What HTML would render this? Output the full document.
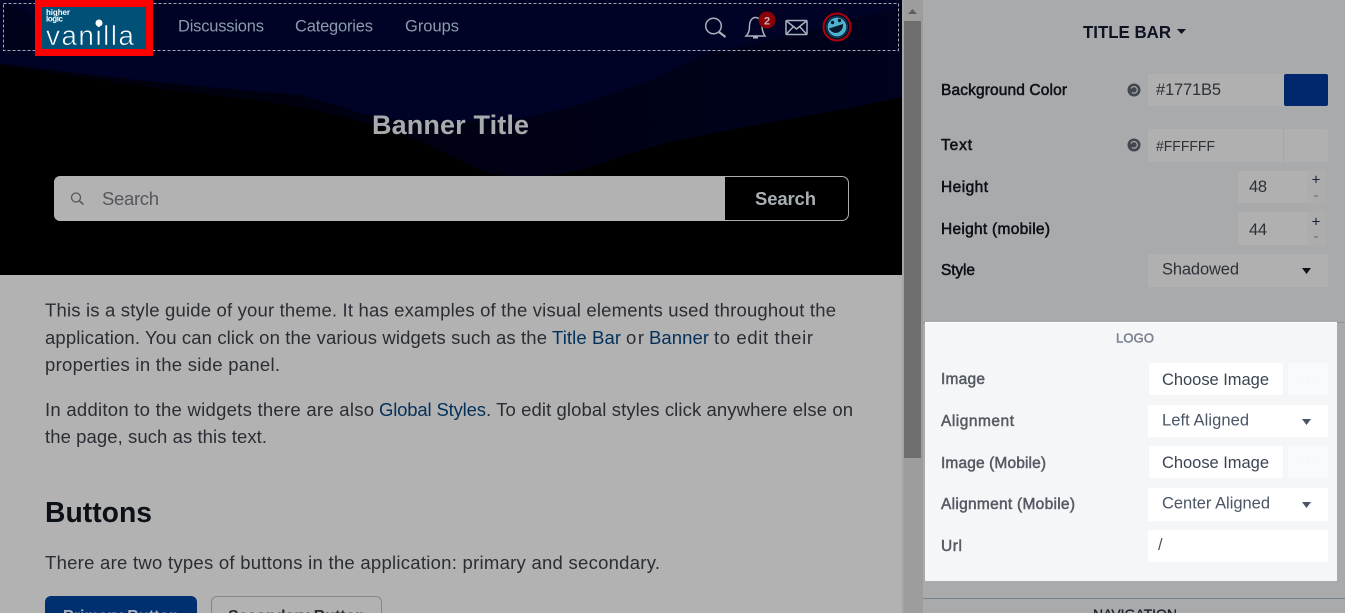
<!DOCTYPE html>
<html><head><meta charset="utf-8"><title>Style Guide</title>
<style>html,body{margin:0;padding:0;width:1345px;height:613px;overflow:hidden;background:#b2b2b2}svg{display:block}text{font-family:"Liberation Sans",Arial,sans-serif}</style></head>
<body>
<svg width="1345" height="613" viewBox="0 0 1345 613" xmlns="http://www.w3.org/2000/svg">
<defs><linearGradient id="m" x1="0" y1="0" x2="1" y2="0"><stop offset="0" stop-color="#00010a"/><stop offset=".5" stop-color="#000112"/><stop offset="1" stop-color="#00021e"/></linearGradient></defs>
<rect width="1345" height="613" fill="#b2b2b2"/>
<!-- banner -->
<rect x="0" y="0" width="902" height="275" fill="#000"/>
<path d="M0 0H902V97C840 112 760 122 667 143C630 152 600 165 567 173C530 178 500 178 480 170C450 155 425 143 400 133C340 115 300 105 240 98C150 88 70 76 0 66Z" fill="url(#m)"/>
<path d="M0 0H902V6C850 22 790 35 710 53C680 65 660 78 633 87C600 98 585 104 567 108C540 115 520 119 500 120C450 124 400 122 360 113C340 106 320 100 300 95C240 90 100 78 0 63Z" fill="#000226"/>
<rect x="0" y="54" width="902" height="2" fill="#000" opacity=".12"/>
<path d="M3 4C25 5 40 20 42 50H3Z" fill="#00011a"/>
<rect x="3.500" y="3.500" width="895" height="47" fill="none" stroke="#a0a9b1" stroke-dasharray="3 2"/>
<!-- logo -->
<rect x="35" y="0" width="118" height="56" fill="#f00"/>
<rect x="42" y="7" width="104" height="42" fill="#005078"/>
<text x="46" y="15" font-size="8" font-weight="bold" fill="#fff" textLength="24">higher</text>
<text x="46" y="21.500" font-size="8" font-weight="bold" fill="#fff" textLength="17">logic</text>
<text x="46" y="45" font-size="28" fill="#fff" stroke="#005078" stroke-width=".6" textLength="88">vanilla</text>
<circle cx="99" cy="23" r="3.500" fill="#fff"/>
<!-- nav -->
<g font-size="16.500" fill="#8a9cab">
<text x="178" y="31.500" textLength="86">Discussions</text>
<text x="295" y="31.500" textLength="78">Categories</text>
<text x="405" y="31.500" textLength="54">Groups</text>
</g>
<!-- icons -->
<g fill="none" stroke="#a7b3bb" stroke-width="1.500">
<circle cx="713.500" cy="26" r="7.800"/><path d="M719 32L725.500 37" stroke-width="2.200"/>
<path d="M746 36C749 33 749.500 30 749.500 26C749.500 21 752 17.500 755.500 17.500C759 17.500 762 21 762 26C762 30 763 33 765 36Z"/>
<path d="M753 37.500H758" stroke-width="2"/>
<rect x="786" y="20.500" width="21" height="14" rx="1"/><path d="M786.500 21L796.500 29L806.500 21M786.500 34L793.500 26.500M806.500 34L799.500 26.500"/>
</g>
<circle cx="767" cy="20" r="8.500" fill="#8a0208"/>
<text x="767" y="24.500" font-size="11" font-weight="bold" fill="#c9b6b8" text-anchor="middle">2</text>
<circle cx="837" cy="27" r="13.500" fill="#03102c" stroke="#b20008" stroke-width="2"/>
<circle cx="837" cy="27" r="10.800" fill="#50b2cf"/>
<circle cx="837" cy="27" r="10" fill="none" stroke="#06263c" stroke-width="1.300"/>
<path d="M829 28.500L843 24C844 32 834 37 829 28.500Z" fill="#06182c"/>
<circle cx="832.500" cy="22.500" r="1.700" fill="#06182c"/><circle cx="839.500" cy="20.500" r="1.700" fill="#06182c"/>
<!-- banner content -->
<text x="372" y="134" font-size="27" font-weight="bold" fill="#a8abae" textLength="157">Banner Title</text>
<path d="M725 176H60a6 6 0 0 0-6 6V215a6 6 0 0 0 6 6H725Z" fill="#b2b2b2"/>
<path d="M725 176.500H842a6.500 6.500 0 0 1 6.500 6.500V214a6.500 6.500 0 0 1-6.500 6.500H725" fill="#000" stroke="#a9afb3"/>
<circle cx="76" cy="197.500" r="4.500" fill="none" stroke="#55585d" stroke-width="1.300"/><path d="M79.500 201L83.500 204.500" stroke="#55585d" stroke-width="1.500"/>
<text x="102" y="205" font-size="18.500" fill="#54575c" textLength="57">Search</text>
<text x="755" y="205" font-size="18.500" font-weight="bold" fill="#a9b0b4" textLength="61">Search</text>
<!-- body text -->
<g font-size="18.500" fill="#2a2d33">
<text x="45" y="316.500" textLength="791">This is a style guide of your theme. It has examples of the visual elements used throughout the</text>
<text x="45" y="344" textLength="502">application. You can click on the various widgets such as the</text>
<text x="552" y="344" textLength="69" fill="#03305a">Title Bar</text>
<text x="626" y="344" textLength="18">or</text>
<text x="649" y="344" textLength="60" fill="#03305a">Banner</text>
<text x="714" y="344" textLength="99">to edit their</text>
<text x="45" y="371" textLength="235">properties in the side panel.</text>
<text x="45" y="416" textLength="329">In additon to the widgets there are also</text>
<text x="379" y="416" textLength="107" fill="#03305a">Global Styles</text>
<text x="486" y="416" textLength="367">. To edit global styles click anywhere else on</text>
<text x="45" y="443" textLength="222">the page, such as this text.</text>
<text x="45" y="569" textLength="615">There are two types of buttons in the application: primary and secondary.</text>
</g>
<text x="45" y="522" font-size="28.300" font-weight="bold" fill="#0c1017" textLength="107">Buttons</text>
<path d="M45 613V602a6 6 0 0 1 6-6H191a6 6 0 0 1 6 6V613Z" fill="#003070"/>
<text x="63" y="621" font-size="16" font-weight="bold" fill="#a7b2c0" textLength="116">Primary Button</text>
<path d="M211.500 613V602a5.500 5.500 0 0 1 5.500-5.500H376a5.500 5.500 0 0 1 5.500 5.500V613" fill="none" stroke="#868686"/>
<text x="228" y="621" font-size="16" font-weight="bold" fill="#2a2d33" textLength="137">Secondary Button</text>
<!-- scrollbar -->
<rect x="902" y="0" width="21" height="613" fill="#9d9d9d"/>
<rect x="902" y="0" width="2" height="613" fill="#a5a5a5"/>
<rect x="904" y="21" width="17" height="437" fill="#6e6e6e"/>
<path d="M908 14L912.500 9L917 14Z" fill="#5f5f5f"/>
<!-- right panel -->
<rect x="923" y="0" width="422" height="613" fill="#a9aaac"/>
<rect x="923" y="322" width="422" height="1" fill="#8e939a"/>
<rect x="923" y="598" width="422" height="1" fill="#76828f"/>
<text x="1083" y="38" font-size="17.500" font-weight="bold" fill="#0d1320" textLength="88" lengthAdjust="spacingAndGlyphs">TITLE BAR</text>
<path d="M1177 29H1186L1181.500 34Z" fill="#0d1320"/>
<g font-size="15.500" fill="#0d1218" stroke="#0d1218" stroke-width=".55">
<text x="941" y="95" textLength="126">Background Color</text>
<text x="941" y="150" textLength="31">Text</text>
<text x="941" y="192" textLength="47">Height</text>
<text x="941" y="234" textLength="109">Height (mobile)</text>
<text x="941" y="275" textLength="34">Style</text>
</g>
<g fill="#42474f"><circle cx="1134" cy="90" r="6.500"/><circle cx="1134" cy="145" r="6.500"/></g>
<g fill="none" stroke="#a9aaac" stroke-width="1.200"><path d="M1131 88.500a3.300 3.300 0 1 1 1 4M1131 143.500a3.300 3.300 0 1 1 1 4"/></g>
<g fill="#b0b0b0">
<rect x="1148" y="74" width="180" height="32" rx="2"/>
<rect x="1148" y="129" width="180" height="33" rx="2"/>
<rect x="1238" y="171" width="69" height="32" rx="2"/>
<rect x="1238" y="212" width="69" height="33" rx="2"/>
<rect x="1148" y="254" width="180" height="33"/>
</g>
<rect x="1284" y="74" width="44" height="32" rx="2" fill="#00266b"/>
<rect x="1283" y="129" width="1" height="33" fill="#a6a6a6"/>
<g fill="#adadad"><rect x="1307" y="171" width="19" height="16"/><rect x="1307" y="188" width="19" height="15"/><rect x="1307" y="212" width="19" height="17"/><rect x="1307" y="230" width="19" height="15"/></g>
<g font-size="16.500" fill="#2d3138">
<text x="1156" y="95" textLength="65">#1771B5</text>
<text x="1156" y="151" font-size="15" textLength="59" lengthAdjust="spacingAndGlyphs">#FFFFFF</text>
<text x="1249" y="192" textLength="18">48</text>
<text x="1249" y="235" textLength="18">44</text>
<text x="1162" y="274.500" textLength="77">Shadowed</text>
</g>
<g font-size="15" fill="#15233d" text-anchor="middle">
<text x="1316" y="184.500">+</text><text x="1316" y="200" fill="#666b75">-</text>
<text x="1316" y="226.500">+</text><text x="1316" y="241" fill="#666b75">-</text>
</g>
<path d="M1302 268H1311L1306.500 274Z" fill="#0d1218"/>
<!-- logo section -->
<rect x="925" y="323" width="412" height="258" fill="#f5f6f8"/>
<rect x="925" y="322" width="412" height="1" fill="#fbfcfd"/>
<text x="1116" y="342.500" font-size="13" fill="#7b8290" stroke="#7b8290" stroke-width=".5" textLength="38">LOGO</text>
<g font-size="15.500" fill="#565b63" stroke="#565b63" stroke-width=".5">
<text x="941" y="384" textLength="44">Image</text>
<text x="941" y="426" textLength="73">Alignment</text>
<text x="941" y="468" textLength="105">Image (Mobile)</text>
<text x="941" y="509" textLength="134">Alignment (Mobile)</text>
<text x="941" y="551" textLength="21">Url</text>
</g>
<g fill="#fff">
<rect x="1149" y="363" width="134" height="32" rx="2"/>
<rect x="1148" y="405" width="180" height="32"/>
<rect x="1149" y="446" width="134" height="32" rx="2"/>
<rect x="1148" y="488" width="180" height="33"/>
<rect x="1148" y="530" width="180" height="32" rx="2"/>
</g>
<rect x="1288" y="363" width="40" height="32" rx="2" fill="#f9fafb"/>
<rect x="1288" y="446" width="40" height="32" rx="2" fill="#f9fafb"/>
<g fill="#f2f3f5"><circle cx="1301" cy="379" r="1"/><circle cx="1308" cy="379" r="1"/><circle cx="1315" cy="379" r="1"/><circle cx="1301" cy="462" r="1"/><circle cx="1308" cy="462" r="1"/><circle cx="1315" cy="462" r="1"/></g>
<g font-size="16.500" fill="#4a5566">
<text x="1162" y="385" textLength="107" fill="#3a4452">Choose Image</text>
<text x="1162" y="425.500" textLength="87">Left Aligned</text>
<text x="1162" y="468" textLength="107" fill="#3a4452">Choose Image</text>
<text x="1162" y="508.500" textLength="108">Center Aligned</text>
<text x="1158" y="550">/</text>
</g>
<path d="M1302 419H1311L1306.500 425Z" fill="#4a5566"/>
<path d="M1302 502H1311L1306.500 508Z" fill="#4a5566"/>
<text x="1093" y="619" font-size="14" fill="#1a1f29" stroke="#1a1f29" stroke-width=".3" textLength="84">NAVIGATION</text>
</svg>
</body></html>
